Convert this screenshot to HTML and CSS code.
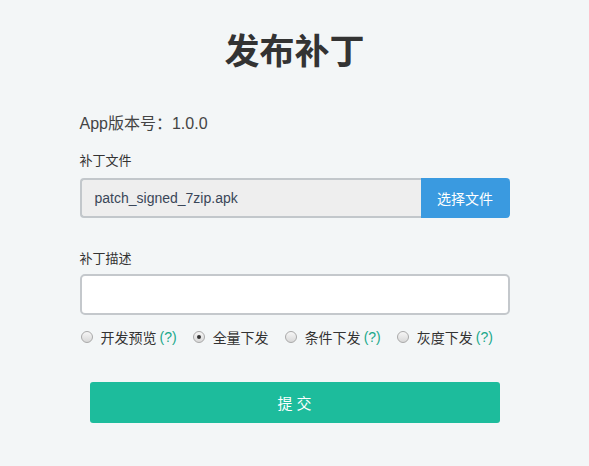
FILE: index.html
```html
<!DOCTYPE html>
<html lang="zh">
<head>
<meta charset="utf-8">
<title>发布补丁</title>
<link rel="stylesheet" href="styles.css">
</head>
<body>
<div class="page">
  <h1 class="title">发布补丁</h1>
  <div class="version">App版本号：1.0.0</div>
  <div class="label">补丁文件</div>
  <div class="file">
    <div class="file-name">patch_signed_7zip.apk</div>
    <div class="file-btn">选择文件</div>
  </div>
  <div class="label label-desc">补丁描述</div>
  <div class="textarea"></div>
  <div class="radios">
    <label class="radio"><span class="dot"></span>开发预览 <span class="help">(?)</span></label>
    <label class="radio"><span class="dot checked"></span>全量下发</label>
    <label class="radio"><span class="dot"></span>条件下发 <span class="help">(?)</span></label>
    <label class="radio"><span class="dot"></span>灰度下发 <span class="help">(?)</span></label>
  </div>
  <div class="submit">提 交</div>
</div>
</body>
</html>
```

FILE: styles.css
```css
html, body {
  margin: 0;
  padding: 0;
  background: #f3f6f7;
  font-family: "Liberation Sans", "Noto Sans CJK SC", sans-serif;
  color: #333;
}
.page {
  width: 430px;
  margin: 0 auto;
  padding-top: 26px;
}
.title {
  margin: 0;
  text-align: center;
  font-size: 35px;
  line-height: 46px;
  font-weight: bold;
  color: #333;
  font-family: "Noto Sans CJK SC", sans-serif;
}
.version {
  margin-top: 42px;
  font-size: 16px;
  line-height: 20px;
  color: #444;
}
.label {
  margin-top: 18px;
  font-size: 13px;
  line-height: 18px;
  color: #333;
}
.file {
  margin-top: 8px;
  display: flex;
  height: 40px;
}
.file-name {
  flex: 1;
  background: #eeeeee;
  border: 2px solid #c2c7cb;
  border-right: none;
  border-radius: 4px 0 0 4px;
  padding-left: 13px;
  display: flex;
  align-items: center;
  font-size: 14px;
  color: #3a4658;
}
.file-btn {
  width: 89px;
  background: #3a9ae0;
  color: #fff;
  border-radius: 0 4px 4px 0;
  display: flex;
  align-items: center;
  justify-content: center;
  font-size: 14px;
}
.label-desc {
  margin-top: 32px;
}
.textarea {
  margin-top: 6px;
  height: 37px;
  background: #fff;
  border: 2px solid #c4c8cc;
  border-radius: 5px;
}
.radios {
  margin-top: 11px;
  display: flex;
  align-items: center;
  height: 22px;
  font-size: 14px;
  color: #333;
}
.radio {
  display: flex;
  align-items: center;
  margin-right: 15px;
}
.dot {
  width: 12px;
  height: 12px;
  border-radius: 50%;
  border: 1px solid #a9a9a9;
  background: linear-gradient(#f6f6f6, #d8d8d8);
  margin-right: 8px;
  margin-left: 1px;
  box-sizing: border-box;
  position: relative;
}
.dot.checked::after {
  content: "";
  position: absolute;
  left: 3px;
  top: 3px;
  width: 4px;
  height: 4px;
  border-radius: 50%;
  background: #333;
}
.help {
  color: #1aa88a;
  margin-left: 3px;
}
.submit {
  margin: 34px 10px 0;
  height: 41px;
  background: #1dbc9c;
  border-radius: 3px;
  color: #fff;
  font-size: 15px;
  display: flex;
  align-items: center;
  justify-content: center;
}
```
